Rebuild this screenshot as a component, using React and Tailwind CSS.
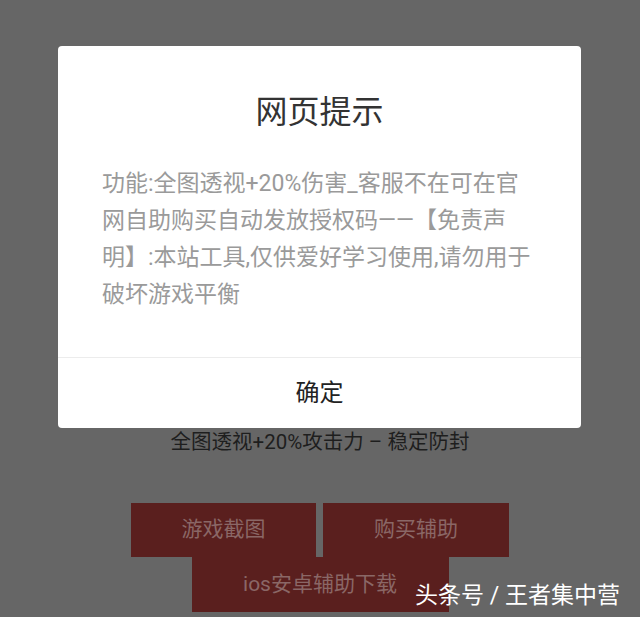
export default function App() {
  return (
    <div className="relative min-h-[617px] overflow-hidden bg-[#666666] font-['Roboto','Noto_Sans_CJK_SC',sans-serif]">
      {/* page content under the mask */}
      <div className="flex flex-col items-center pt-[428px]">
        <p className="text-[20.5px] leading-[28px] text-[#1e1e1e]">全图透视+20%攻击力 – 稳定防封</p>
        <div className="mt-[47px] flex gap-[7px]">
          <button className="h-[54px] w-[185px] bg-[#5a1f1e] text-[21px] text-[#8a6766]">游戏截图</button>
          <button className="h-[54px] w-[186px] bg-[#5a1f1e] text-[21px] text-[#8a6766]">购买辅助</button>
        </div>
        <button className="h-[55px] w-[257px] bg-[#5a1f1e] text-[21px] text-[#8a6766]">ios安卓辅助下载</button>
      </div>

      {/* alert dialog */}
      <div className="absolute left-[58px] top-[46px] w-[523px] rounded-[4px] bg-white">
        <div className="px-[44px] pb-[44px] pt-[46px]">
          <h2 className="text-center text-[32px] leading-[40px] text-[#333333]">网页提示</h2>
          <p className="mt-[33px] text-[23px] leading-[37px] text-[#9a9a9a]">
            功能:全图透视+20%伤害_客服不在可在官网自助购买自动发放授权码——【免责声明】:本站工具,仅供爱好学习使用,请勿用于破坏游戏平衡
          </p>
        </div>
        <div className="flex h-[71px] items-center justify-center border-t border-[#ececec] text-[24px] text-[#222222]">
          确定
        </div>
      </div>

      <span className="absolute bottom-[7px] right-[20px] text-[23px] leading-[28px] text-white">头条号 / 王者集中营</span>
    </div>
  );
}
